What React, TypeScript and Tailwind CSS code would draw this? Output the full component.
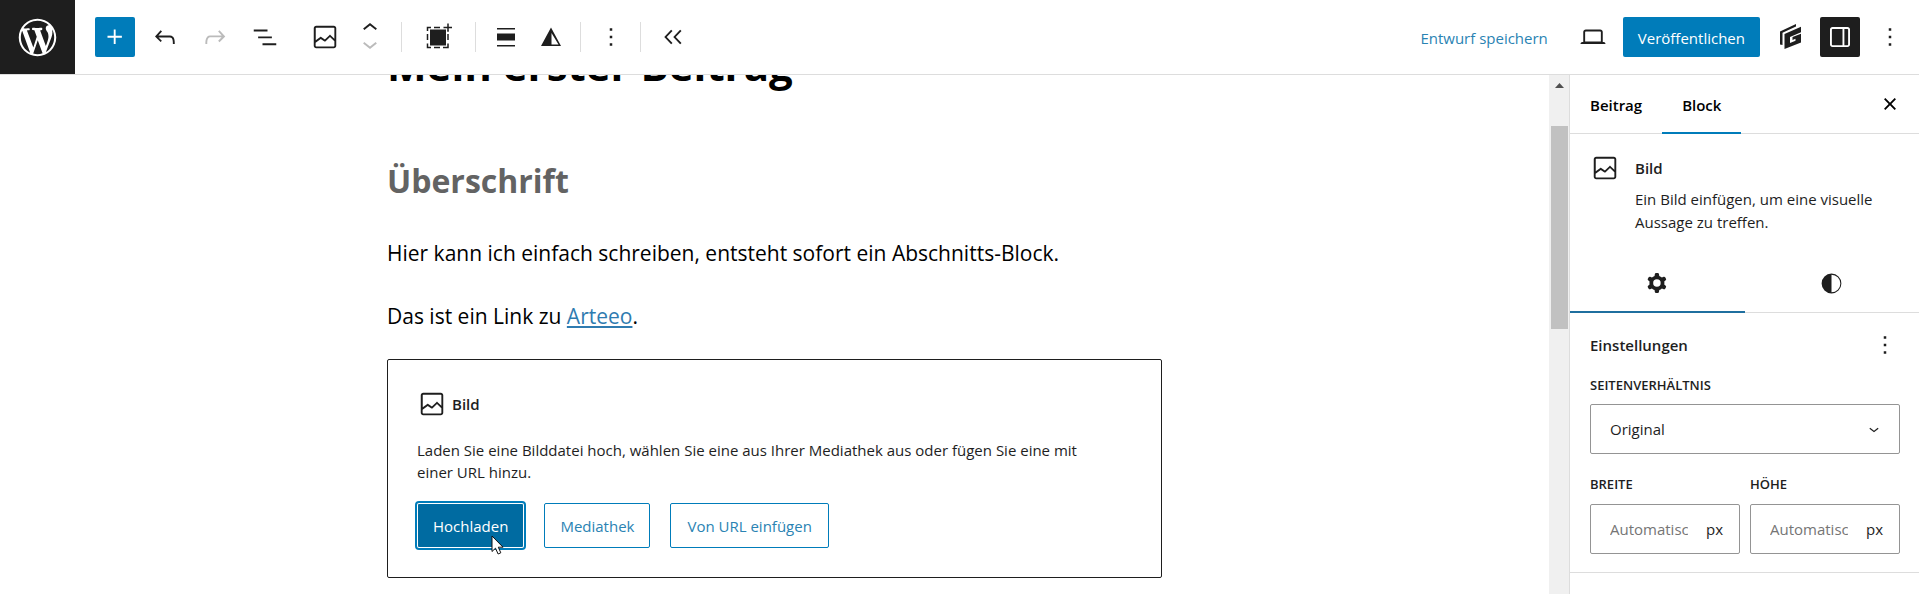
import type { ButtonHTMLAttributes, ReactNode } from "react"

const icons = {
  plus: "M11 12.5V17.5H12.5V12.5H17.5V11H12.5V6H11V11H6V12.5H11Z",
  undo: "M18.3 11.7c-.6-.6-1.4-.9-2.3-.9H6.7l2.9-3.3-1.1-1-4.5 5L8.5 16l1-1-2.7-2.7H16c.5 0 .9.2 1.3.5 1 1 1 3.4 1 4.5v.3h1.5v-.2c0-1.5 0-4.3-1.5-5.7z",
  redo: "M15.6 6.5l-1.1 1 2.9 3.3H8c-.9 0-1.7.3-2.3.9-1.4 1.5-1.4 4.2-1.4 5.6v.2h1.5v-.3c0-1.1 0-3.5 1-4.5.3-.3.7-.5 1.3-.5h9.2L14.5 15l1.1 1.1 4.6-4.6-4.6-5z",
  listView: "M3 6h11v1.5H3V6Zm3.5 5.5h11V13h-11v-1.5ZM21 17H10v1.5h11V17Z",
  chevronUp: "M6.5 12.4L12 8l5.5 4.4-.9 1.2L12 10l-4.5 3.6-1-1.2z",
  chevronDown: "M17.5 11.6L12 16l-5.5-4.4.9-1.2L12 14l4.5-3.6 1 1.2z",
  image: "M19 3H5c-1.1 0-2 .9-2 2v14c0 1.1.9 2 2 2h14c1.1 0 2-.9 2-2V5c0-1.1-.9-2-2-2zM5 4.5h14c.3 0 .5.2.5.5v8.4l-3-2.9c-.3-.3-.8-.3-1 0L11.9 14 9 12c-.3-.2-.6-.2-.8 0l-3.6 2.6V5c-.1-.3.1-.5.4-.5zm14 15H5c-.3 0-.5-.2-.5-.5v-2.4l4.1-3 3 1.9c.3.2.7.2.9-.1L16 12l3.5 3.4V19c0 .3-.2.5-.5.5z",
  more: "M13 19h-2v-2h2v2zm0-6h-2v-2h2v2zm0-6h-2V5h2v2z",
  close: "M12 13.06l3.712 3.713 1.061-1.06L13.061 12l3.712-3.712-1.06-1.06L12 10.938 8.288 7.227l-1.061 1.06L10.939 12l-3.712 3.712 1.06 1.061L12 13.061z",
  laptop: "M20.5 16h-.7V8c0-1.1-.9-2-2-2H6.2c-1.1 0-2 .9-2 2v8h-.7c-.8 0-1.5.7-1.5 1.5h20c0-.8-.7-1.5-1.5-1.5zM5.7 8c0-.3.2-.5.5-.5h11.6c.3 0 .5.2.5.5v7.6H5.7V8z",
  drawer: "M18 4H6c-1.1 0-2 .9-2 2v12c0 1.1.9 2 2 2h12c1.1 0 2-.9 2-2V6c0-1.1-.9-2-2-2zm-4 14.5H6c-.3 0-.5-.2-.5-.5V6c0-.3.2-.5.5-.5h8v13zm4.5-.5c0 .3-.2.5-.5.5h-2.5v-13H18c.3 0 .5.2.5.5v12z",
  align: "M3 3h18v1.600H3zM3 8.500h18v7H3zM3 20h18v1.600H3z",
  collapse: "M11.6 7.2l-1.1-1L5 12l5.5 5.8 1.1-1L7 12zM18.8 7.2l-1.1-1L12.200 12l5.500 5.800 1.100-1L14.200 12z",
  contrast: "M12 2.500a9.500 9.500 0 100 19 9.500 9.500 0 000-19zm0 1v17a8.500 8.500 0 000-17z",
  cog: "M10.289 4.836A1 1 0 0111.275 4h1.306a1 1 0 01.987.836l.244 1.466c.787.26 1.503.679 2.108 1.218l1.393-.522a1 1 0 011.216.437l.653 1.13a1 1 0 01-.23 1.273l-1.148.944a6.025 6.025 0 010 2.435l1.149.946a1 1 0 01.23 1.272l-.653 1.13a1 1 0 01-1.216.437l-1.394-.522c-.605.54-1.32.958-2.108 1.218l-.244 1.466a1 1 0 01-.987.836h-1.306a1 1 0 01-.986-.836l-.244-1.466a5.995 5.995 0 01-2.108-1.218l-1.394.522a1 1 0 01-1.217-.436l-.653-1.131a1 1 0 01.23-1.272l1.149-.946a6.026 6.026 0 010-2.435l-1.148-.944a1 1 0 01-.23-1.272l.653-1.131a1 1 0 011.217-.437l1.393.522a5.994 5.994 0 012.108-1.218l.244-1.466zM14.929 12a3 3 0 11-6 0 3 3 0 016 0z",
}

function Icon({ name, className = "size-[30px]" }: { name: keyof typeof icons; className?: string }) {
  return (
    <svg viewBox="0 0 24 24" className={`shrink-0 ${className}`} fill="currentColor" fillRule="evenodd" aria-hidden="true">
      <path d={icons[name]} />
    </svg>
  )
}

function WordPressLogo() {
  return (
    <svg viewBox="-2 -2 24 24" className="size-[45px]" fill="currentColor" aria-hidden="true">
      <path d="M20 10c0-5.51-4.49-10-10-10C4.48 0 0 4.49 0 10c0 5.52 4.48 10 10 10 5.51 0 10-4.48 10-10zM7.78 15.37L4.37 6.22c.55-.02 1.17-.08 1.17-.08.5-.06.44-1.13-.06-1.11 0 0-1.45.11-2.37.11-.18 0-.37 0-.58-.01C4.12 2.69 6.87 1.11 10 1.11c2.33 0 4.45.87 6.05 2.34-.68-.11-1.65.39-1.65 1.58 0 .74.45 1.36.9 2.1.35.61.55 1.36.55 2.46 0 1.49-1.4 5-1.4 5l-3.03-8.37c.54-.02.82-.17.82-.17.5-.05.44-1.25-.06-1.22 0 0-1.44.12-2.38.12-.87 0-2.33-.12-2.33-.12-.5-.03-.56 1.2-.06 1.22l.92.08 1.26 3.41zM17.41 10c.24-.64.74-1.87.43-4.25.7 1.29 1.05 2.71 1.05 4.25 0 3.29-1.73 6.24-4.4 7.78.97-2.59 1.94-5.2 2.92-7.78zM6.1 18.09C3.12 16.65 1.11 13.53 1.11 10c0-1.3.23-2.48.72-3.59C3.25 10.3 4.67 14.2 6.1 18.09zm4.03-6.63l2.58 6.98c-.86.29-1.76.45-2.71.45-.79 0-1.57-.11-2.29-.33.81-2.38 1.62-4.74 2.42-7.1z" />
    </svg>
  )
}

function ContainerIcon() {
  return (
    <svg viewBox="0 0 30 30" className="size-[30px]" fill="none" stroke="currentColor" strokeWidth="1.5" aria-hidden="true">
      <path d="M6 7.500h16v16H6z" fill="currentColor" stroke="none" />
      <path d="M3.500 9V5.500H7M10 5.500h6M3.500 12v6M3.500 21.500v4H7M10 25.500h6M19 25.500h5v-4M24 18v-6M24 9.500v-1" />
      <path d="M24 1.500v8M19.500 5.500H28" />
    </svg>
  )
}

function TriangleIcon() {
  return (
    <svg viewBox="0 0 30 30" className="size-[30px]" fill="currentColor" fillRule="evenodd" aria-hidden="true">
      <path d="M15 5.500 25 24H5zM15.500 11v11.500h7z" />
    </svg>
  )
}

function GreenshiftLogo() {
  return (
    <svg viewBox="0 0 30 30" className="size-[30px]" fill="currentColor" aria-hidden="true">
      <path d="M5 22.500V9.500L21 2v2.500L7.500 10.800v12.200z" />
      <path d="M9.500 12 26 4.800v5.500L15 15v6l5.500-2.200v-2l-3 1.200v-3L26 11.700v8.800L9.500 27z" />
    </svg>
  )
}

function Cursor() {
  return (
    <svg viewBox="0 0 14 20" className="absolute top-8 left-[74px] h-5 w-[14px]" aria-hidden="true">
      <path d="M1 1v15.500l3.500-3.300 2.600 5.800 2.700-1.200-2.500-5.600H12z" fill="#fff" stroke="#111" strokeWidth="1" />
    </svg>
  )
}

function ToolButton({ children, className = "w-10", ...props }: ButtonHTMLAttributes<HTMLButtonElement> & { children: ReactNode }) {
  return (
    <button type="button" className={`flex h-10 shrink-0 items-center justify-center rounded-xs ${className}`} {...props}>
      {children}
    </button>
  )
}

function Header() {
  return (
    <header className="flex h-[75px] shrink-0 items-center border-b border-[#ddd]">
      <a href="#" aria-label="WordPress" className="flex w-[75px] shrink-0 items-center justify-center self-stretch bg-[#1e1e1e] text-white">
        <WordPressLogo />
      </a>
      <div className="flex items-center gap-[10px] pl-5">
        <ToolButton aria-label="Block hinzufügen" className="w-10 bg-[#007cba] text-white"><Icon name="plus" /></ToolButton>
        <ToolButton aria-label="Rückgängig"><Icon name="undo" /></ToolButton>
        <ToolButton aria-label="Wiederholen" disabled className="w-10 text-[#bbb]"><Icon name="redo" /></ToolButton>
        <ToolButton aria-label="Dokumentübersicht"><Icon name="listView" /></ToolButton>
      </div>
      <div className="flex items-center pl-5">
        <ToolButton aria-label="Bild"><Icon name="image" /></ToolButton>
        <div className="ml-[10px] flex w-[30px] flex-col items-center">
          <button type="button" aria-label="Nach oben" className="h-5 overflow-hidden"><Icon name="chevronUp" className="-mt-1 size-[30px]" /></button>
          <button type="button" aria-label="Nach unten" disabled className="h-5 overflow-hidden text-[#bbb]"><Icon name="chevronDown" className="-mt-2 size-[30px]" /></button>
        </div>
        <div className="ml-4 flex h-[30px] w-[75px] items-center justify-center border-x border-[#ddd]">
          <ToolButton aria-label="Container"><ContainerIcon /></ToolButton>
        </div>
        <div className="flex h-[30px] w-[105px] items-center justify-center gap-[5px] border-r border-[#ddd]">
          <ToolButton aria-label="Ausrichtung"><Icon name="align" className="size-6" /></ToolButton>
          <ToolButton aria-label="Duotone"><TriangleIcon /></ToolButton>
        </div>
        <div className="flex h-[30px] w-[60px] items-center justify-center border-r border-[#ddd]">
          <ToolButton aria-label="Optionen"><Icon name="more" /></ToolButton>
        </div>
        <ToolButton aria-label="Werkzeuge ausblenden" className="ml-3 w-10"><Icon name="collapse" /></ToolButton>
      </div>
      <div className="ml-auto flex items-center gap-[10px] pr-[9px] text-[15px]">
        <button type="button" className="px-[15px] pt-0.5 text-[#2a83b3]">Entwurf speichern</button>
        <ToolButton aria-label="Ansicht"><Icon name="laptop" /></ToolButton>
        <ToolButton className="bg-[#007cba] px-[15px] pt-0.5 text-white">Veröffentlichen</ToolButton>
        <ToolButton aria-label="Greenshift"><GreenshiftLogo /></ToolButton>
        <ToolButton aria-label="Einstellungen" className="w-10 bg-[#1e1e1e] text-white"><Icon name="drawer" /></ToolButton>
        <ToolButton aria-label="Optionen"><Icon name="more" /></ToolButton>
      </div>
    </header>
  )
}

function ImagePlaceholder() {
  return (
    <section className="mt-[25px] rounded-xs border border-[#1e1e1e] p-[29px] text-[15px] text-[#1e1e1e]">
      <h3 className="flex h-[30px] items-center gap-[5px] font-semibold">
        <Icon name="image" />
        Bild
      </h3>
      <p className="mt-5 max-w-[690px] leading-[22px]">
        Laden Sie eine Bilddatei hoch, wählen Sie eine aus Ihrer Mediathek aus oder fügen Sie eine mit einer URL hinzu.
      </p>
      <div className="mt-5 flex gap-5">
        <button type="button" className="relative h-[45px] rounded-xs bg-[#006ba1] px-4 pt-0.5 text-white ring-2 ring-[#007cba] inset-ring inset-ring-white">
          Hochladen
          <Cursor />
        </button>
        <button type="button" className="h-[45px] rounded-xs border border-[#007cba] px-[15px] pt-0.5 text-[#2a83b3]">Mediathek</button>
        <button type="button" className="h-[45px] rounded-xs border border-[#007cba] px-4 pt-0.5 text-[#2a83b3]">Von URL einfügen</button>
      </div>
    </section>
  )
}

function Canvas() {
  return (
    <main className="min-w-0 flex-1 overflow-hidden">
      <div className="mx-auto max-w-[775px] text-[21px] text-black">
        <h1 className="-mt-10 text-[42px] leading-[60px] font-bold">Mein erster Beitrag</h1>
        <h2 className="mt-[63px] text-[32px] leading-[46px] font-bold text-[#636363]">Überschrift</h2>
        <p className="mt-[31px] leading-9">Hier kann ich einfach schreiben, entsteht sofort ein Abschnitts-Block.</p>
        <p className="mt-[27px] leading-9">
          Das ist ein Link zu <a href="#" className="text-[#2f7bb0] underline">Arteeo</a>.
        </p>
        <ImagePlaceholder />
      </div>
    </main>
  )
}

function Scrollbar() {
  return (
    <div className="flex w-5 shrink-0 flex-col items-center bg-[#f0f0f0]" aria-hidden="true">
      <svg viewBox="0 0 20 51" className="h-[51px] w-5" fill="#505050">
        <path d="M6 13h9l-4.500-5z" />
      </svg>
      <div className="h-[203px] w-[17px] bg-[#c1c1c1]" />
    </div>
  )
}

function SizeInput({ id, label }: { id: string; label: string }) {
  return (
    <div className="min-w-0 flex-1">
      <label htmlFor={id} className="block text-[13px] leading-5 font-semibold uppercase">{label}</label>
      <div className="mt-[10px] flex h-[50px] items-center rounded-xs border border-[#949494] pr-4 pl-[19px]">
        <input id={id} placeholder="Automatisch" className="w-[78px] min-w-0 outline-none placeholder:text-[#757575]" />
        <span className="ml-auto">px</span>
      </div>
    </div>
  )
}

function Sidebar() {
  return (
    <aside className="w-[350px] shrink-0 overflow-hidden border-l border-[#ddd] text-[15px] text-[#1e1e1e]">
      <div className="flex h-[59px] items-stretch border-b border-[#ddd] pr-[9px] font-semibold text-black">
        <button type="button" className="border-b-2 border-transparent px-5 pt-1">Beitrag</button>
        <button type="button" className="-mb-px border-b-2 border-[#007cba] px-5 pt-[3px]">Block</button>
        <ToolButton aria-label="Schließen" className="my-auto ml-auto w-10"><Icon name="close" /></ToolButton>
      </div>
      <div className="flex gap-[15px] p-5 pt-[19px]">
        <Icon name="image" />
        <div>
          <h2 className="leading-[30px] font-semibold">Bild</h2>
          <p className="mt-[5px] leading-[23px]">Ein Bild einfügen, um eine visuelle Aussage zu treffen.</p>
        </div>
      </div>
      <div className="flex h-[59px] border-b border-[#ddd]">
        <button type="button" aria-label="Einstellungen" className="-mb-px flex flex-1 items-center justify-center border-b-2 border-[#1f6f9f]"><Icon name="cog" /></button>
        <button type="button" aria-label="Stile" className="flex flex-1 items-center justify-center"><Icon name="contrast" className="size-[25px]" /></button>
      </div>
      <div className="border-b border-[#ddd] pt-3 pr-[19px] pb-[18px] pl-5">
        <div className="flex h-10 items-center justify-between">
          <h2 className="font-semibold">Einstellungen</h2>
          <button type="button" aria-label="Optionen"><Icon name="more" /></button>
        </div>
        <label htmlFor="ratio" className="mt-[10px] block text-[13px] leading-5 font-semibold">SEITENVERHÄLTNIS</label>
        <div className="relative mt-[9px]">
          <select id="ratio" className="h-[50px] w-full appearance-none rounded-xs border border-[#949494] px-[19px]">
            <option>Original</option>
          </select>
          <Icon name="chevronDown" className="pointer-events-none absolute top-[15px] right-4 size-5" />
        </div>
        <div className="mt-5 flex gap-[10px]">
          <SizeInput id="width" label="Breite" />
          <SizeInput id="height" label="Höhe" />
        </div>
      </div>
    </aside>
  )
}

export default function App() {
  return (
    <div className="flex h-screen flex-col overflow-hidden bg-white font-['Open_Sans',sans-serif] text-[#1e1e1e]">
      <Header />
      <div className="flex min-h-0 flex-1">
        <Canvas />
        <Scrollbar />
        <Sidebar />
      </div>
    </div>
  )
}
